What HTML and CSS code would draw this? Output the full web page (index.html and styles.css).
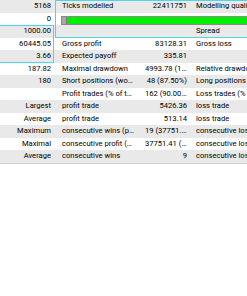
FILE: index.html
```html
<!DOCTYPE html>
<html>
<head>
<meta charset="utf-8">
<link rel="stylesheet" href="styles.css">
</head>
<body>
<div class="report">
  <div class="row alt"><div class="c v">5168</div><div class="c l">Ticks modelled</div><div class="c v">22411751</div><div class="c l">Modelling quality</div></div>
  <div class="row"><div class="c v">0</div><div class="c bar-cell"><div class="bar"><div class="bar-empty"></div><div class="bar-fill"></div></div></div></div>
  <div class="row alt"><div class="c v">1000.00</div><div class="c l"></div><div class="c v"></div><div class="c l">Spread</div></div>
  <div class="row"><div class="c v">60445.05</div><div class="c l">Gross profit</div><div class="c v">83128.31</div><div class="c l">Gross loss</div></div>
  <div class="row alt"><div class="c v">3.66</div><div class="c l">Expected payoff</div><div class="c v">335.81</div><div class="c l"></div></div>
  <div class="row"><div class="c v">187.82</div><div class="c l">Maximal drawdown</div><div class="c v">4993.78 (10.12%)</div><div class="c l">Relative drawdown</div></div>
  <div class="row alt"><div class="c v">180</div><div class="c l">Short positions (won %)</div><div class="c v">48 (87.50%)</div><div class="c l">Long positions (won %)</div></div>
  <div class="row"><div class="c v"></div><div class="c l">Profit trades (% of total)</div><div class="c v">162 (90.00%)</div><div class="c l">Loss trades (% of total)</div></div>
  <div class="row alt"><div class="c v">Largest</div><div class="c l">profit trade</div><div class="c v">5426.36</div><div class="c l">loss trade</div></div>
  <div class="row"><div class="c v">Average</div><div class="c l">profit trade</div><div class="c v">513.14</div><div class="c l">loss trade</div></div>
  <div class="row alt"><div class="c v">Maximum</div><div class="c l">consecutive wins (profit in money)</div><div class="c v">19 (37751.41)</div><div class="c l">consecutive losses (loss in money)</div></div>
  <div class="row"><div class="c v">Maximal</div><div class="c l">consecutive profit (count of wins)</div><div class="c v">37751.41 (19)</div><div class="c l">consecutive loss (count of losses)</div></div>
  <div class="row alt"><div class="c v">Average</div><div class="c l">consecutive wins</div><div class="c v">9</div><div class="c l">consecutive losses</div></div>
  <div class="sel sel-a"></div>
  <div class="sel sel-b"></div>
</div>
</body>
</html>
```
FILE: styles.css
```css
html, body {
  margin: 0;
  padding: 0;
  background: #ffffff;
}
body {
  font-family: Roboto, "Liberation Sans", sans-serif;
  font-size: 7.6px;
  color: #000000;
  overflow: hidden;
}
.report {
  position: relative;
  width: 247px;
  overflow: hidden;
  border-bottom: 1px solid #d0d0d0;
}
.row {
  display: grid;
  grid-template-columns: 55px 83px 53px 120px;
  height: 12.5px;
  background: #ffffff;
}
.row.alt {
  background: #e9e9e9;
}
.c {
  line-height: 12.5px;
  white-space: nowrap;
  overflow: hidden;
  min-width: 0;
}
.v {
  text-align: right;
  padding-left: 7px;
  padding-right: 4px;
  text-overflow: ellipsis;
}
.row > .v:first-child {
  padding-left: 0;
}
.l {
  text-align: left;
  padding-left: 7px;
  padding-right: 4px;
  text-overflow: ellipsis;
}
.row > .c:last-child {
  padding-left: 5px;
  text-overflow: clip;
}
.row > .bar-cell:last-child {
  padding-left: 6px;
}
.bar-cell {
  grid-column: 2 / 5;
  display: flex;
  align-items: center;
}
.bar {
  display: flex;
  width: 100%;
  height: 9px;
  margin-top: 3px;
  border: 1px solid #8a8a8a;
  box-sizing: border-box;
}
.bar-empty {
  width: 4px;
  background: #a8a8a8;
  border-right: 1px solid #7a7a7a;
}
.bar-fill {
  flex: 1;
  background: #00ee00;
}
.sel {
  position: absolute;
  border: 1.5px solid #4fd6e6;
  box-sizing: border-box;
}
.sel-a {
  left: -10px;
  top: 25px;
  width: 63.5px;
  height: 37.5px;
}
.sel-b {
  left: 55px;
  top: 0;
  width: 260px;
  height: 37.5px;
}
```
